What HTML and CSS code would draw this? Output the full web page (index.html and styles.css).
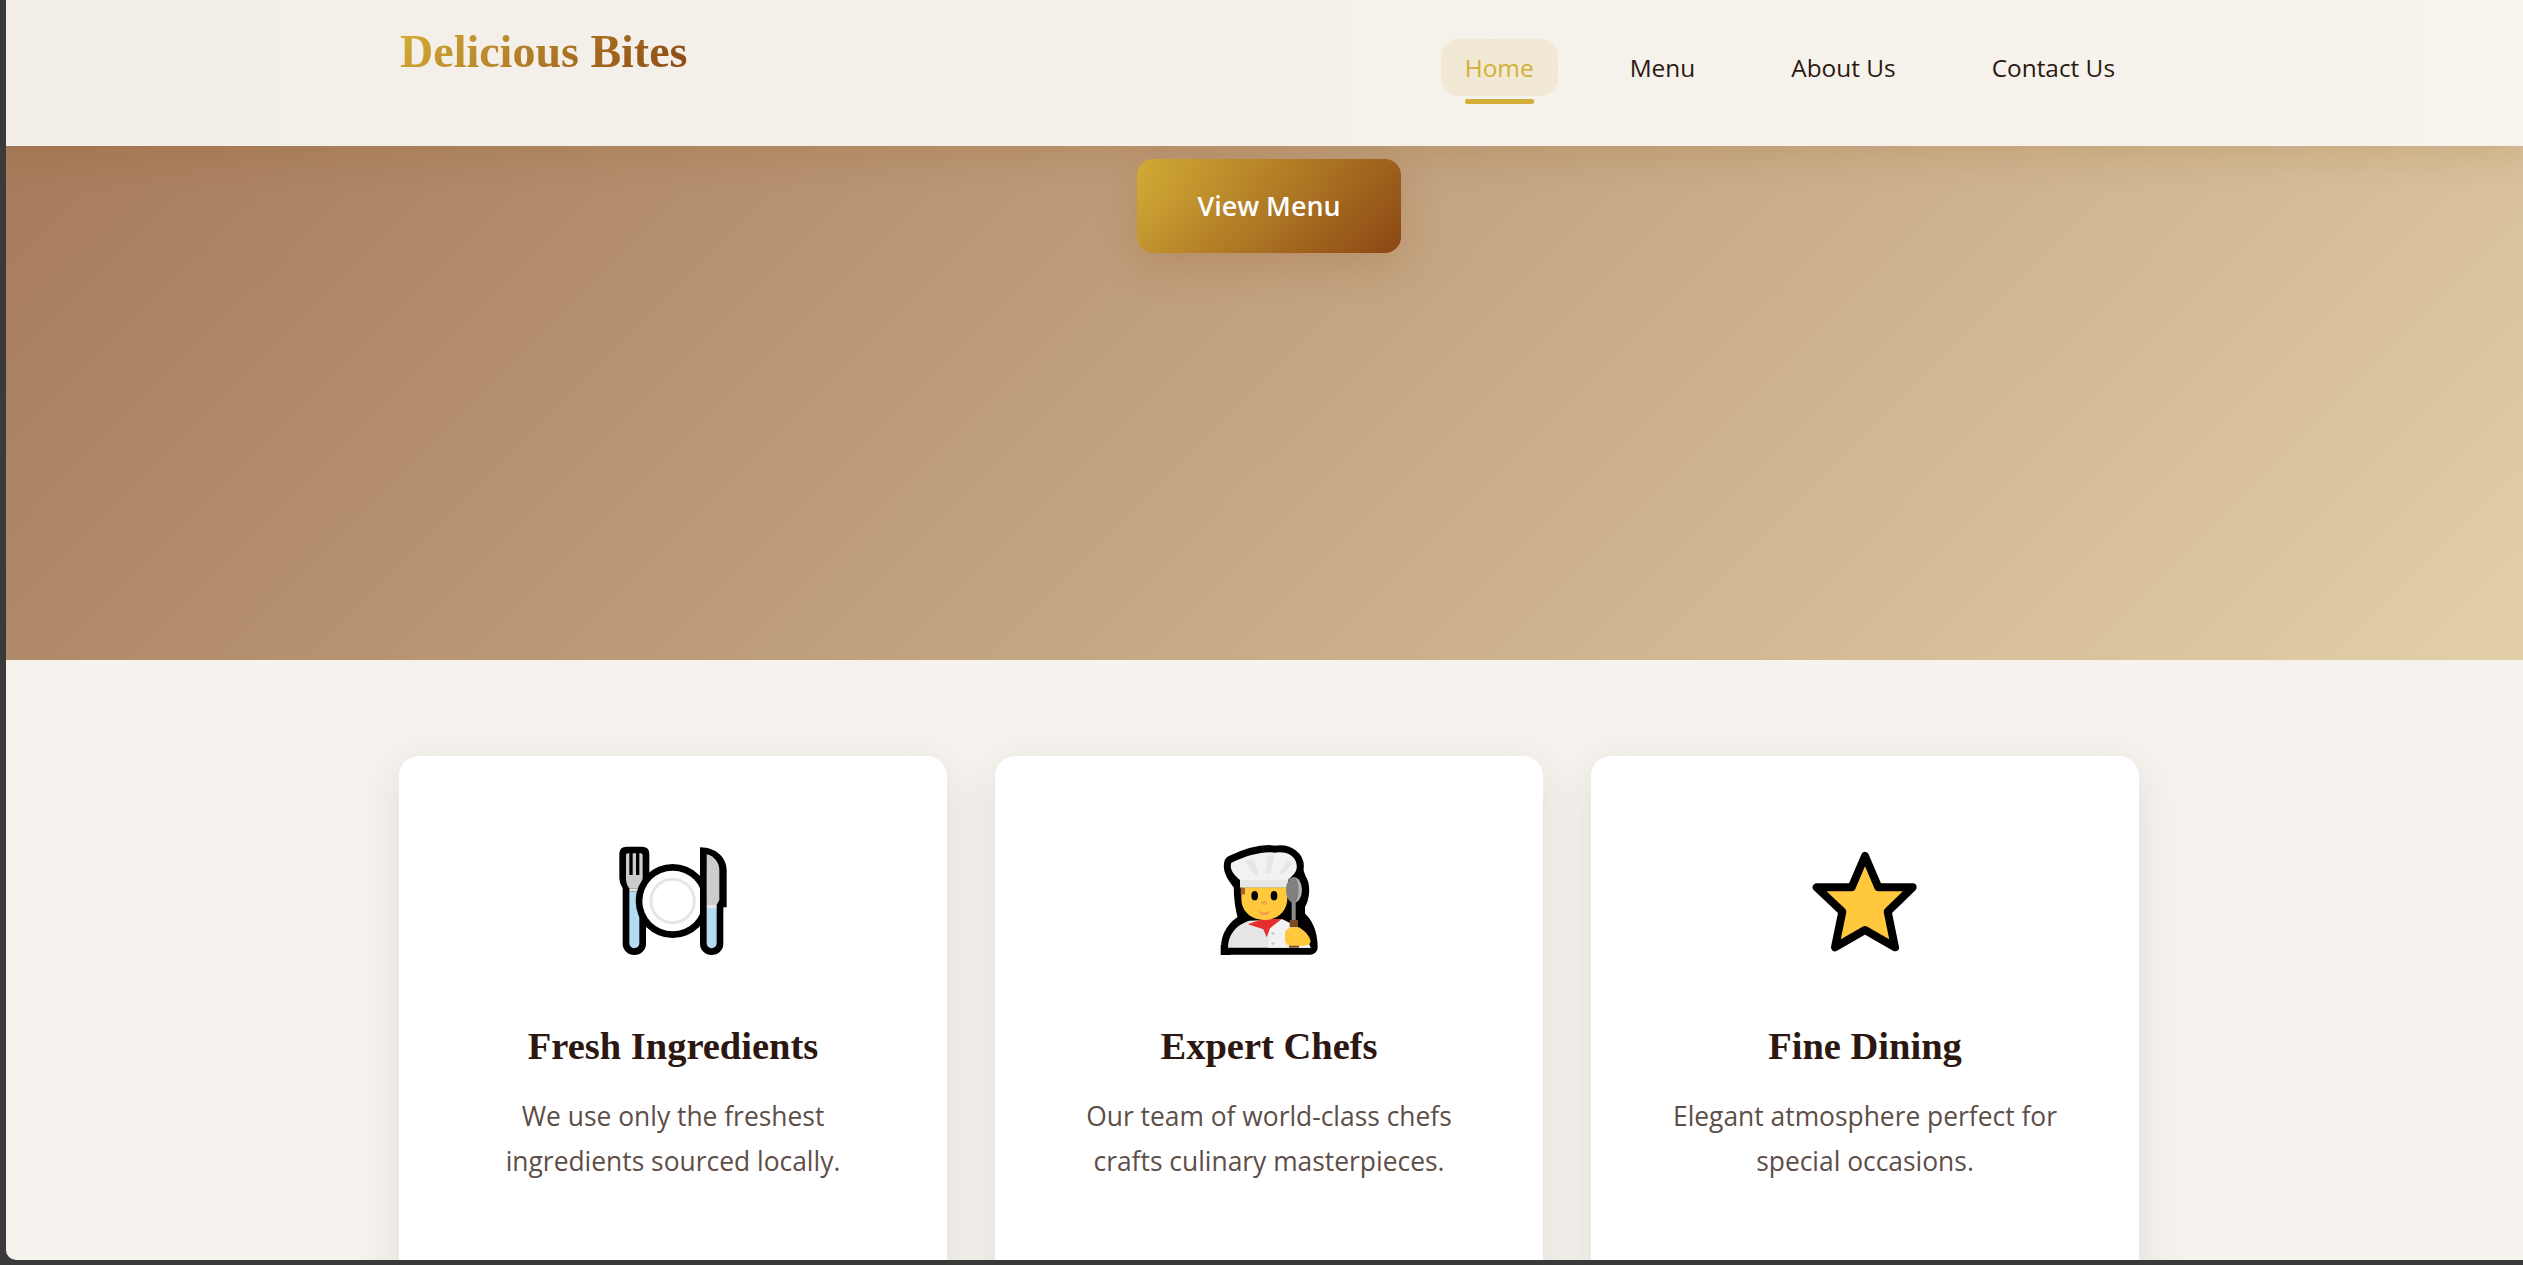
FILE: index.html
```html
<!DOCTYPE html>
<html lang="en">
<head>
    <meta charset="UTF-8">
    <meta name="viewport" content="width=device-width, initial-scale=1.0">
    <title>Delicious Bites</title>
    <link rel="stylesheet" href="styles.css">
</head>
<body>
    <div class="page">
        <header class="site-header">
            <div class="container header-row">
                <div class="logo">Delicious Bites</div>
                <nav class="nav">
                    <a class="nav-link active" href="#">Home</a>
                    <a class="nav-link" href="#">Menu</a>
                    <a class="nav-link" href="#">About Us</a>
                    <a class="nav-link" href="#">Contact Us</a>
                </nav>
            </div>
        </header>

        <section class="hero">
            <a class="hero-btn" href="#">View Menu</a>
        </section>

        <section class="features">
            <div class="container feature-grid">
                <div class="card">
                    <svg class="card-icon" viewBox="69 63 360 360">
                        <path d="M110 80H156Q178 80 178 102V175Q178 190 168 205V372A35 33 0 0 1 98 372V205Q88 190 88 175V102Q88 80 110 80Z" fill="#000"/>
                        <path d="M114 100H118V165H128V100H138V165H148V100H152Q158 100 158 106V175Q158 195 148 205H118Q108 195 108 175V106Q108 100 114 100Z" fill="#ccc"/>
                        <rect x="118" y="205" width="30" height="10" fill="#e6e6e6"/>
                        <path d="M118 215H148V370A15 15 0 0 1 118 370Z" fill="#b1dcf3"/>
                        <circle cx="248" cy="243" r="111" fill="#000"/>
                        <circle cx="248" cy="243" r="91" fill="#fff"/>
                        <circle cx="248" cy="243" r="65" fill="none" stroke="#e6e6e6" stroke-width="9"/>
                        <path d="M330 82C380 82 410 115 410 150V262H400V372A35 33 0 0 1 330 372Z" fill="#000"/>
                        <path d="M350 103C372 108 388 128 388 150V240L380 255H350Z" fill="#ccc"/>
                        <rect x="350" y="255" width="30" height="9" fill="#e6e6e6"/>
                        <path d="M350 264H380V370A15 15 0 0 1 350 370Z" fill="#b1dcf3"/>
                    </svg>
                    <h3>Fresh Ingredients</h3>
                    <p>We use only the freshest<br>ingredients sourced locally.</p>
                </div>
                <div class="card">
                    <svg class="card-icon" viewBox="55 33 360 360">
                        <path d="M122 98C170 75 220 62 255 68C295 62 322 85 318 115C316 128 322 135 326 148C338 165 338 200 322 225L322 262C345 275 360 310 360 353H112C112 320 130 290 165 270C155 240 150 210 150 165C130 140 115 120 122 98Z" fill="#000" stroke="#000" stroke-width="42" stroke-linejoin="round"/>
                        <rect x="90" y="345" width="30" height="30" fill="#000"/>
                        <path d="M112 353C112 315 135 285 175 272L270 268C295 278 325 290 340 310L360 353Z" fill="#e6e6e6"/>
                        <path d="M240 272L275 268C300 280 325 290 340 310L360 353H232Z" fill="#f2f2f2"/>
                        <path d="M172 283L222 265L272 268L238 295L228 322L218 298Z" fill="#e52f2f"/>
                        <circle cx="247" cy="310" r="5" fill="#ccc"/>
                        <circle cx="247" cy="340" r="5" fill="#ccc"/>
                        <path d="M152 172H290V205C290 245 260 270 221 270C182 270 152 245 152 205Z" fill="#ffc83d"/>
                        <rect x="150" y="172" width="13" height="21" fill="#a5632c"/>
                        <path d="M122 98C170 75 220 62 255 68C295 62 322 85 318 115C316 130 302 140 292 150V172H148V150C130 135 115 118 122 98Z" fill="#f2f2f2"/>
                        <rect x="148" y="150" width="144" height="22" fill="#e6e6e6"/>
                        <path d="M165 92L190 135H204L188 85ZM232 76L224 130H240L252 76ZM292 92L262 132H276L310 98Z" fill="#e6e6e6"/>
                        <ellipse cx="192" cy="197" rx="10" ry="14" fill="#000"/>
                        <ellipse cx="250" cy="197" rx="10" ry="14" fill="#000"/>
                        <ellipse cx="221" cy="218" rx="9" ry="6" fill="#f7a54a"/>
                        <path d="M203 240Q221 254 239 240Q239 256 221 256Q203 256 203 240Z" fill="#f7a54a"/>
                        <ellipse cx="310" cy="180" rx="24" ry="38" fill="#b3b3b3"/>
                        <path d="M310 142A24 38 0 0 0 310 218A14 38 0 0 0 310 142Z" fill="#808080"/>
                        <rect x="303" y="214" width="12" height="56" fill="#8c8c8c"/>
                        <path d="M297 270H322V292H297Z" fill="#7b4a22"/>
                        <rect x="295" y="342" width="30" height="11" fill="#7b4a22"/>
                        <path d="M283 310C283 300 295 292 312 292H325C345 305 358 320 360 335C358 343 350 347 340 347H300C290 347 283 340 283 330Z" fill="#ffc83d"/>
                    </svg>
                    <h3>Expert Chefs</h3>
                    <p>Our team of world-class chefs<br>crafts culinary masterpieces.</p>
                </div>
                <div class="card">
                    <svg class="card-icon" viewBox="45 33 360 360">
                        <path d="M225 78L265 172H368L293 245L315 352L225 300L135 352L157 245L80 172H185Z" fill="#ffc83d" stroke="#000" stroke-width="24" stroke-linejoin="round"/>
                    </svg>
                    <h3>Fine Dining</h3>
                    <p>Elegant atmosphere perfect for<br>special occasions.</p>
                </div>
            </div>
        </section>
    </div>
</body>
</html>
```
FILE: styles.css
```css
* {
    box-sizing: border-box;
}
html, body {
    height: 100%;
}
body {
    margin: 0;
    padding: 0 0 5px 6px;
    background-color: #3a3a3a;
    font-family: "Open Sans", sans-serif;
    overflow: hidden;
}
.page {
    width: 2526px;
    height: 100%;
    background-color: #f6f3ee;
    border-bottom-left-radius: 10px;
    overflow: hidden;
}
.container {
    width: 1740px;
    margin: 0 auto;
}

/* header */
.site-header {
    position: relative;
    z-index: 2;
    padding: 24px 0 50px;
    background: linear-gradient(90deg, #f3eee8, #f7f4ed);
    box-shadow: 0 6px 36px rgba(139, 69, 19, 0.16);
}
.header-row {
    display: flex;
    justify-content: space-between;
    align-items: flex-start;
}
.logo {
    margin-left: 1px;
    font-family: "Liberation Serif", serif;
    font-size: 46px;
    font-weight: 700;
    line-height: 56px;
    background: linear-gradient(135deg, #d4af37, #8b4513);
    -webkit-background-clip: text;
    background-clip: text;
    color: transparent;
}
.nav {
    display: flex;
    gap: 48px;
    margin-top: 15px;
}
.nav-link {
    position: relative;
    padding: 12px 24px;
    height: 57px;
    border-radius: 18px;
    font-size: 24.4px;
    line-height: 33px;
    color: #2c1810;
    text-decoration: none;
}
.nav-link.active {
    background-color: rgba(212, 175, 55, 0.12);
    color: #d4af37;
}
.nav-link.active::after {
    content: "";
    position: absolute;
    left: 24px;
    right: 24px;
    bottom: -8px;
    height: 5px;
    border-radius: 2px;
    background-color: #d4af37;
}

/* hero */
.hero {
    height: 514px;
    padding-top: 13px;
    text-align: center;
    background: linear-gradient(135deg, #a67b5b, #e2cfa8);
}
.hero-btn {
    display: inline-block;
    width: 264px;
    height: 94px;
    border-radius: 16px;
    font-size: 26.9px;
    font-weight: 600;
    line-height: 94px;
    color: #fff;
    text-decoration: none;
    background: linear-gradient(135deg, #d4af37, #8b4513);
    box-shadow: 0 12px 40px rgba(139, 69, 19, 0.2);
}

/* feature cards */
.features {
    padding-top: 96px;
}
.feature-grid {
    display: grid;
    grid-template-columns: repeat(3, 1fr);
    gap: 48px;
}
.card {
    padding: 85px 48px 140px;
    border-radius: 20px;
    background-color: #fff;
    text-align: center;
    box-shadow: 0 12px 48px rgba(44, 24, 16, 0.1);
}
.card-icon {
    display: block;
    width: 120px;
    height: 120px;
    margin: 0 auto;
}
.card h3 {
    margin: 60px 0 0;
    font-family: "Liberation Serif", serif;
    font-size: 38.5px;
    font-weight: 700;
    line-height: 50px;
    color: #2c1810;
}
.card p {
    margin: 23px 0 0;
    font-size: 26.4px;
    line-height: 45px;
    color: #5d4e47;
}
```
